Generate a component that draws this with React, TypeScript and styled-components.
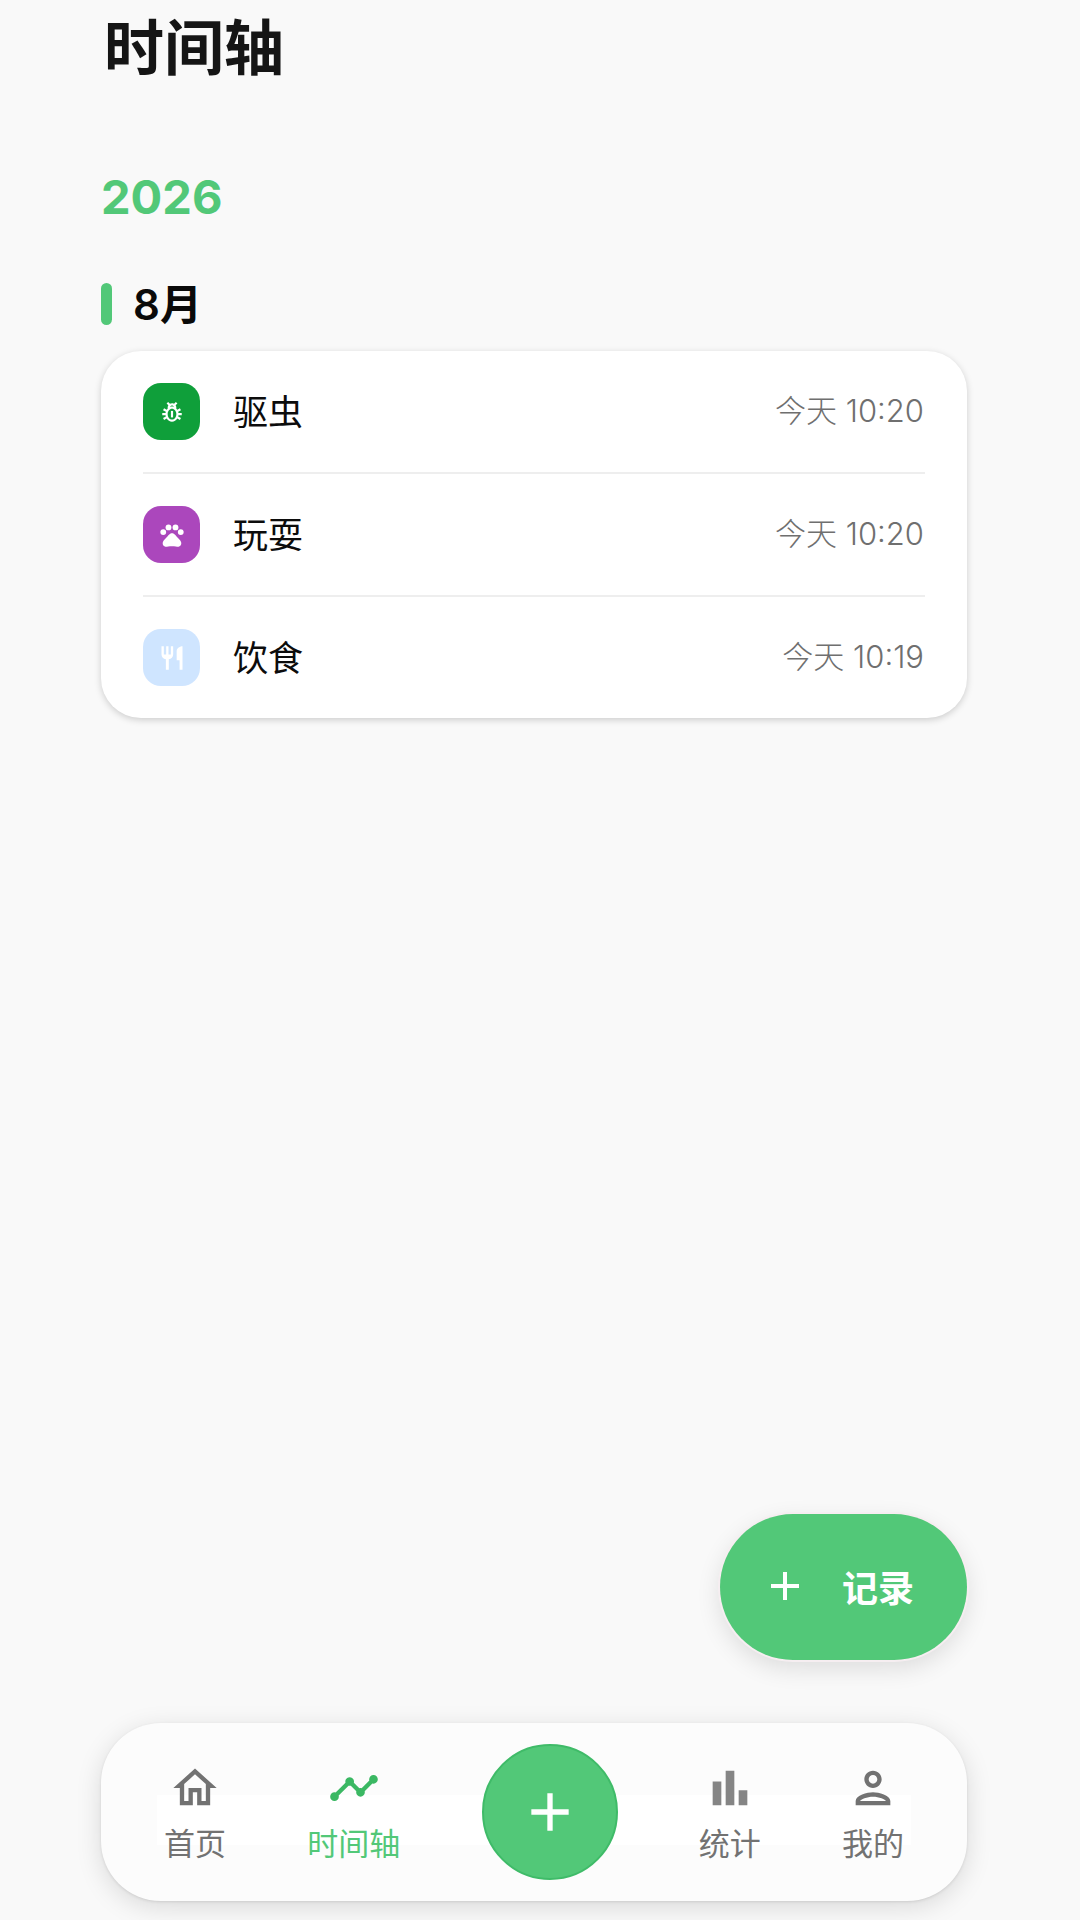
import React from 'react'
import styled, { createGlobalStyle } from 'styled-components'
import {
  MdAdd,
  MdBarChart,
  MdOutlineHome,
  MdOutlinePerson,
  MdOutlinePestControl,
  MdPets,
  MdRestaurant,
  MdTimeline,
} from 'react-icons/md'

const GREEN = '#52c878'
const FONT = 'Inter, "Noto Sans CJK SC", sans-serif'

/**
 * ------------------------- STYLES -------------------------------
 */
const GlobalStyle = createGlobalStyle`
  html, body {
    margin: 0;
    background: #f9f9f9;
  }
  * {
    box-sizing: border-box;
  }
`

const Page = styled.main`
  position: relative;
  height: 1920px;
  overflow: hidden;
  padding: 6px 113px 19px 101px;
  display: flex;
  flex-direction: column;
  background: #f9f9f9;
  font-family: ${FONT};
`

const Title = styled.h1`
  margin: 0 0 0 3px;
  font-size: 60px;
  line-height: 84px;
  font-weight: 700;
  color: #151515;
`

const Year = styled.div`
  margin-top: 77px;
  font-size: 47px;
  line-height: 60px;
  font-weight: 700;
  color: ${GREEN};
`

const MonthRow = styled.div`
  margin-top: 53px;
  display: flex;
  align-items: center;
  gap: 21px;
  height: 48px;
`

const MonthBar = styled.span`
  width: 11px;
  height: 42px;
  border-radius: 6px;
  background: ${GREEN};
`

const MonthLabel = styled.h2`
  margin: 0 0 5px;
  font-size: 42px;
  font-weight: 600;
  color: #0a0a0a;
`

const Card = styled.section`
  margin-top: 23px;
  padding: 0 42px;
  background: #fff;
  border-radius: 40px;
  box-shadow: 0 2px 7px rgba(0, 0, 0, 0.18);
`

const Row = styled.div`
  height: 121px;
  display: flex;
  align-items: center;
`

const Divider = styled.div`
  height: 2px;
  background: #eeeeee;
`

const IconTile = styled.span<{ $bg: string; $size: number }>`
  width: 57px;
  height: 57px;
  border-radius: 18px;
  display: flex;
  align-items: center;
  justify-content: center;
  color: #fff;
  font-size: ${props => props.$size}px;
  background: ${props => props.$bg};
`

const RowName = styled.span`
  margin: 0 0 5px 33px;
  flex: 1;
  font-size: 35px;
  color: #0c0c0c;
`

const RowTime = styled.span`
  margin: 0 1px 6px 0;
  font-size: 31px;
  font-weight: 300;
  color: #6f6f6f;
`

const Fab = styled.button`
  position: absolute;
  right: 113px;
  bottom: 260px;
  width: 247px;
  height: 146px;
  padding: 0 0 2px 41px;
  border: 0;
  border-radius: 73px;
  display: flex;
  align-items: center;
  gap: 33px;
  color: #fff;
  background: ${GREEN};
  font-family: ${FONT};
  font-size: 36px;
  font-weight: 700;
  box-shadow: 0 0 0 2px #f6eef1, 0 8px 24px rgba(0, 0, 0, 0.12);
`

const Nav = styled.nav`
  position: relative;
  margin-top: auto;
  height: 178px;
  padding: 0 63px;
  display: flex;
  align-items: center;
  justify-content: space-between;
  background: #fcfcfc;
  border-radius: 60px;
  box-shadow: 0 6px 26px rgba(0, 0, 0, 0.13), 0 1px 3px rgba(0, 0, 0, 0.1);

  &::before {
    content: '';
    position: absolute;
    left: 56px;
    right: 56px;
    top: 72px;
    height: 50px;
    background: #fff;
  }
`

const NavItem = styled.div<{ $active?: boolean }>`
  position: relative;
  display: flex;
  flex-direction: column;
  align-items: center;
  gap: 12px;
  color: ${props => (props.$active ? GREEN : '#727272')};
`

const NavIcon = styled.span<{ $tint?: string }>`
  height: 52px;
  display: flex;
  align-items: center;
  justify-content: center;
  font-size: 52px;
  color: ${props => props.$tint || 'inherit'};
`

const NavLabel = styled.span`
  font-size: 31px;
  line-height: 36px;
`

const CenterButton = styled.button`
  position: relative;
  width: 136px;
  height: 136px;
  padding: 0;
  border: 2px solid #3fbb68;
  border-radius: 50%;
  display: flex;
  align-items: center;
  justify-content: center;
  color: #fff;
  font-size: 64px;
  background: ${GREEN};
`

/**
 * ----------------------- COMPONENT -------------------------------
 */
const records = [
  { name: '驱虫', time: '今天 10:20', bg: '#0f9f3a', size: 26, icon: <MdOutlinePestControl /> },
  { name: '玩耍', time: '今天 10:20', bg: '#ab47bc', size: 28, icon: <MdPets /> },
  { name: '饮食', time: '今天 10:19', bg: '#cfe5ff', size: 28, icon: <MdRestaurant /> },
]

const App: React.FC = () => {
  return (
    <Page>
      <GlobalStyle />
      <Title>时间轴</Title>
      <Year>2026</Year>
      <MonthRow>
        <MonthBar />
        <MonthLabel>8月</MonthLabel>
      </MonthRow>
      <Card>
        {records.map((record, i) => (
          <React.Fragment key={record.name}>
            {i > 0 && <Divider />}
            <Row>
              <IconTile $bg={record.bg} $size={record.size}>
                {record.icon}
              </IconTile>
              <RowName>{record.name}</RowName>
              <RowTime>{record.time}</RowTime>
            </Row>
          </React.Fragment>
        ))}
      </Card>
      <Fab>
        <MdAdd size={48} />
        记录
      </Fab>
      <Nav>
        <NavItem>
          <NavIcon>
            <MdOutlineHome />
          </NavIcon>
          <NavLabel>首页</NavLabel>
        </NavItem>
        <NavItem $active>
          <NavIcon $tint="#3bb863">
            <MdTimeline />
          </NavIcon>
          <NavLabel>时间轴</NavLabel>
        </NavItem>
        <CenterButton>
          <MdAdd />
        </CenterButton>
        <NavItem>
          <NavIcon $tint="#858585">
            <MdBarChart />
          </NavIcon>
          <NavLabel>统计</NavLabel>
        </NavItem>
        <NavItem>
          <NavIcon>
            <MdOutlinePerson />
          </NavIcon>
          <NavLabel>我的</NavLabel>
        </NavItem>
      </Nav>
    </Page>
  )
}

export default App
